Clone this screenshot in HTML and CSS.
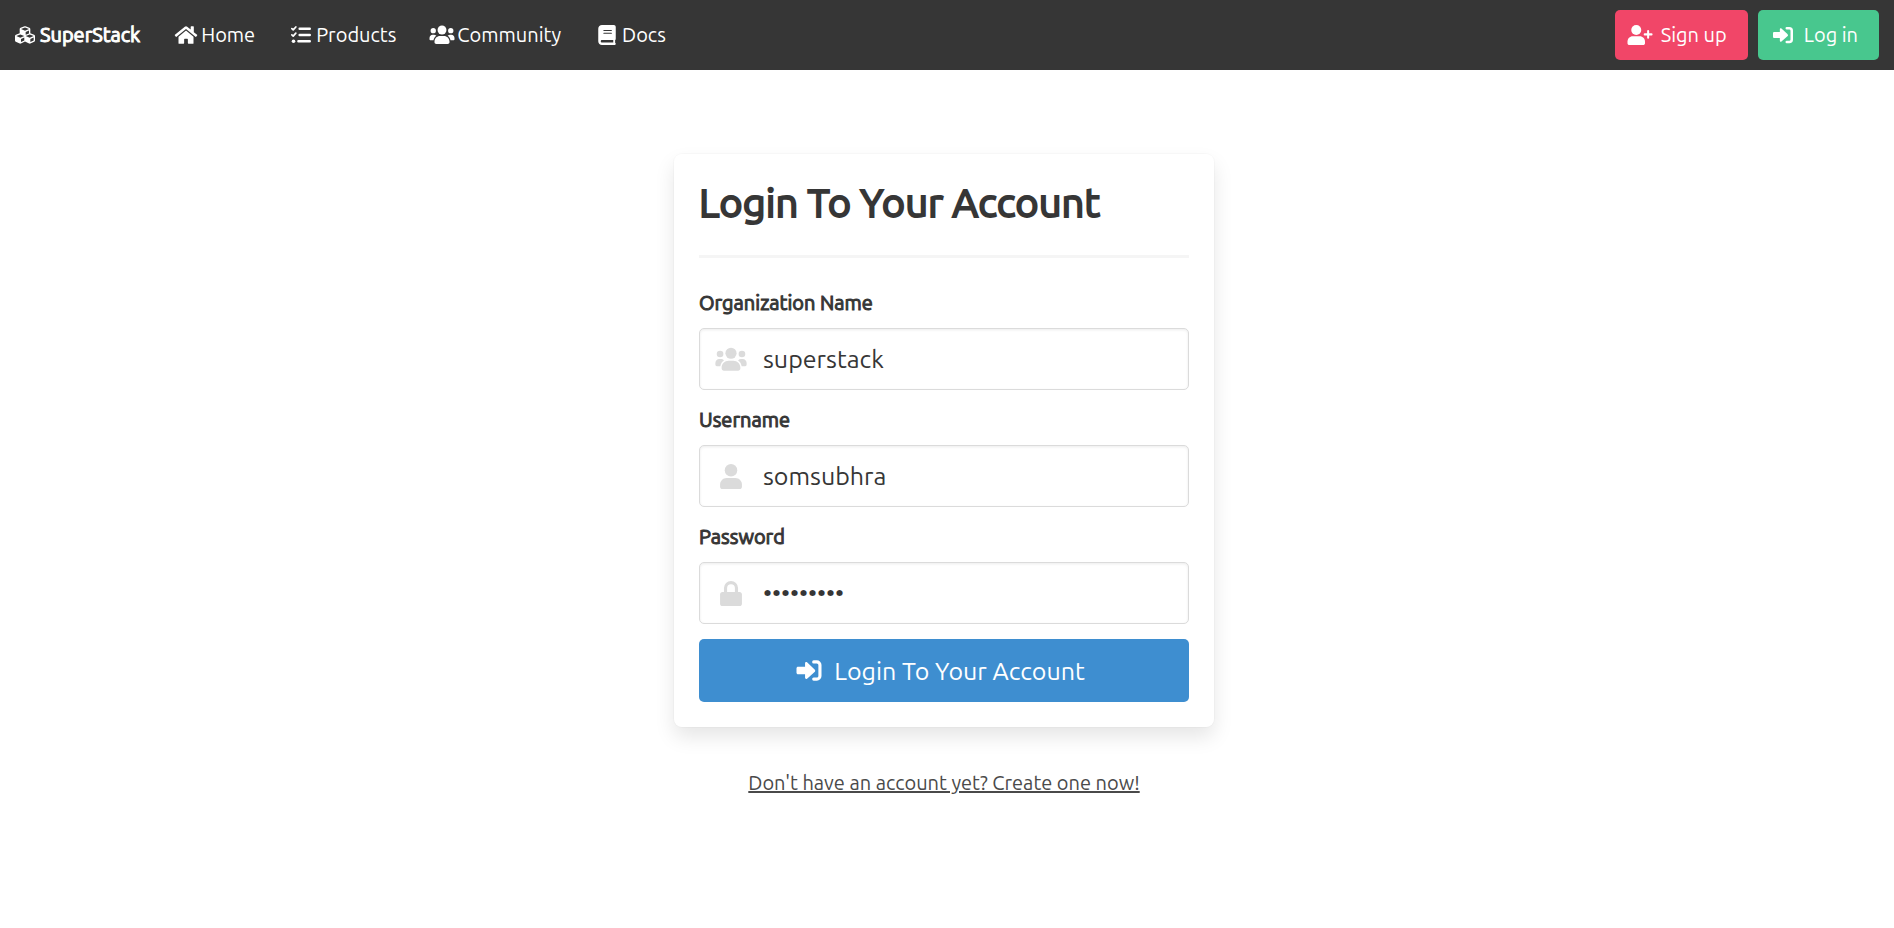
FILE: index.html
```html
<!DOCTYPE html>
<html lang="en">
<head>
<meta charset="utf-8">
<title>SuperStack</title>
<link rel="stylesheet" href="styles.css">
</head>
<body>
<svg class="sprite" aria-hidden="true">
  <symbol id="cubes" viewBox="0 0 512 512"><path fill-rule="evenodd" d="M488.600 250.200 392 214V105.500c0-15-9.300-28.400-23.400-33.700l-100-37.500c-8.100-3.100-17.100-3.100-25.300 0l-100 37.500c-14.100 5.300-23.400 18.700-23.400 33.700V214l-96.600 36.200C9.300 255.500 0 268.900 0 283.900V394c0 13.600 7.700 26.100 19.900 32.200l100 50c10.100 5.100 22.100 5.100 32.200 0l103.900-52 103.900 52c10.100 5.100 22.100 5.100 32.200 0l100-50c12.200-6.100 19.900-18.600 19.900-32.200V283.900c0-15-9.300-28.400-23.400-33.700zM358 214.800l-85 31.900v-68.200l85-37v73.300zM154 104.100l102-38.200 102 38.200v.6l-102 41.400-102-41.400v-.6zm84 291.100-85 42.500v-79.100l85-38.800v75.400zm0-112-102 41.400-102-41.400v-.6l102-38.200 102 38.200v.6zm240 112-85 42.500v-79.100l85-38.800v75.400zm0-112-102 41.400-102-41.400v-.6l102-38.200 102 38.200v.6z"/></symbol>
  <symbol id="home" viewBox="0 0 576 512"><path d="M280.400 148.300 96 300.100V464a16 16 0 0 0 16 16l112.100-.3a16 16 0 0 0 15.900-16V368a16 16 0 0 1 16-16h64a16 16 0 0 1 16 16v95.600a16 16 0 0 0 16 16.100L464 480a16 16 0 0 0 16-16V300L295.700 148.300a12.200 12.200 0 0 0-15.300 0zM571.600 251.500 488 182.600V44.100a12 12 0 0 0-12-12h-56a12 12 0 0 0-12 12v72.600L318.500 43a48 48 0 0 0-61 0L4.300 251.500a12 12 0 0 0-1.600 16.900l25.500 31A12 12 0 0 0 45.200 301l235.200-193.700a12.200 12.200 0 0 1 15.300 0L530.900 301a12 12 0 0 0 16.900-1.600l25.500-31a12 12 0 0 0-1.700-16.900z"/></symbol>
  <symbol id="tasks" viewBox="0 0 512 512"><g fill="none" stroke="currentColor" stroke-width="44" stroke-linecap="round" stroke-linejoin="round"><path d="M22 94l34 32 68-76M22 252l34 32 68-76"/><path stroke-width="64" d="M222 96h258M222 256h258M190 416h290"/></g><circle cx="64" cy="416" r="46"/></symbol>
  <symbol id="users" viewBox="0 0 640 512"><circle cx="320" cy="128" r="114"/><circle cx="96" cy="144" r="68"/><circle cx="544" cy="144" r="68"/><path d="M368 280h-96c-82 0-144 62-144 144v16c0 26 20 44 48 44h288c28 0 48-18 48-44v-16c0-82-62-144-144-144zM176 274c-18-18-40-26-64-26H80c-46 0-80 36-80 82v34c0 18 14 28 30 28h72c8-52 34-94 74-118zM464 274c18-18 40-26 64-26h32c46 0 80 36 80 82v34c0 18-14 28-30 28h-72c-8-52-34-94-74-118z"/></symbol>
  <symbol id="book" viewBox="0 0 448 512"><path fill-rule="evenodd" d="M448 336V48c0-26.500-21.500-48-48-48H96C43 0 0 43 0 96v320c0 53 43 96 96 96h320c17.700 0 32-14.300 32-32 0-12-6-22-16-28v-66c10-9 16-21 16-50zM144 128h192a14 14 0 0 1 0 28H144a14 14 0 0 1 0-28zm0 68h192a14 14 0 0 1 0 28H144a14 14 0 0 1 0-28zm240 252H96c-18 0-32-14-32-32s14-32 32-32h288v64z"/></symbol>
  <symbol id="user" viewBox="0 0 448 512"><circle cx="224" cy="128" r="128"/><path d="M314 288H134C60 288 0 348 0 422v42c0 27 21 48 48 48h352c27 0 48-21 48-48v-42c0-74-60-134-134-134z"/></symbol>
  <symbol id="user-plus" viewBox="0 0 640 512"><circle cx="224" cy="128" r="128"/><path d="M314 288H134C60 288 0 348 0 422v42c0 27 21 48 48 48h352c27 0 48-21 48-48v-42c0-74-60-134-134-134z"/><path fill="none" stroke="currentColor" stroke-width="52" stroke-linecap="round" d="M528 152v176M440 240h176"/></symbol>
  <symbol id="signin" viewBox="0 0 512 512"><path d="M376 238.500 216 88c-15-14-40.700-4-40.700 18v72H32c-18 0-32 14-32 32v92c0 18 14 32 32 32h143.300v72c0 22 25.700 32 40.700 18l160-142.500a24 24 0 0 0 0-35z"/><path d="M352 80h64a64 64 0 0 1 64 64v224a64 64 0 0 1-64 64h-64" fill="none" stroke="currentColor" stroke-width="64" stroke-linecap="round"/></symbol>
  <symbol id="lock" viewBox="0 0 448 512"><path fill-rule="evenodd" d="M80 224v-80a144 144 0 0 1 288 0v80h32c27 0 48 21 48 48v192c0 27-21 48-48 48H48c-27 0-48-21-48-48V272c0-27 21-48 48-48h32zm64 0h160v-80a80 80 0 0 0-160 0v80z"/></symbol>
</svg>
<header class="navbar">
  <nav class="nav-links" aria-label="Main">
    <a class="nav-item brand" href="#"><svg class="icon-sm"><use href="#cubes"/></svg>SuperStack</a>
    <a class="nav-item" href="#"><svg class="icon"><use href="#home"/></svg>Home</a>
    <a class="nav-item" href="#"><svg class="icon"><use href="#tasks"/></svg>Products</a>
    <a class="nav-item" href="#"><svg class="icon"><use href="#users"/></svg>Community</a>
    <a class="nav-item" href="#"><svg class="icon"><use href="#book"/></svg>Docs</a>
  </nav>
  <div class="nav-buttons">
    <a class="button signup" href="#"><svg class="icon"><use href="#user-plus"/></svg>Sign up</a>
    <a class="button login" href="#"><svg class="icon"><use href="#signin"/></svg>Log in</a>
  </div>
</header>
<main class="page">
  <form class="card">
    <h1 class="title">Login To Your Account</h1>
    <hr class="divider">
    <div class="field">
      <label class="label" for="org">Organization Name</label>
      <div class="control"><input class="input" id="org" type="text" value="superstack"><svg class="field-icon"><use href="#users"/></svg></div>
    </div>
    <div class="field">
      <label class="label" for="username">Username</label>
      <div class="control"><input class="input" id="username" type="text" value="somsubhra"><svg class="field-icon"><use href="#user"/></svg></div>
    </div>
    <div class="field">
      <label class="label" for="password">Password</label>
      <div class="control"><input class="input" id="password" type="password" value="superpass"><svg class="field-icon"><use href="#lock"/></svg></div>
    </div>
    <button class="submit" type="button"><svg class="submit-icon"><use href="#signin"/></svg>Login To Your Account</button>
  </form>
  <a class="create" href="#">Don't have an account yet? Create one now!</a>
</main>
</body>
</html>
```
FILE: styles.css
```css
* { box-sizing: border-box; }
body {
  margin: 0;
  background: #fff;
  color: #363636;
  font-family: Ubuntu, "Noto Sans", sans-serif;
  font-size: 20px;
  line-height: 30px;
}
svg { fill: currentColor; flex: none; }
.sprite { display: none; }
.navbar {
  display: flex;
  justify-content: space-between;
  align-items: center;
  min-height: 70px;
  padding: 0 15px;
  background: #363636;
}
.nav-links { display: flex; gap: 31px; }
.nav-item {
  display: flex;
  align-items: center;
  color: #fff;
  text-decoration: none;
}
.brand {
  gap: 5px;
  -webkit-text-stroke: 1px currentColor;
}
.icon-sm { width: 20px; height: 20px; }
.icon { width: 30px; height: 20px; }
.nav-buttons { display: flex; gap: 10px; }
.button {
  display: flex;
  align-items: center;
  gap: 6px;
  height: 50px;
  padding: 0 21px 0 10px;
  border-radius: 5px;
  color: #fff;
  text-decoration: none;
}
.signup { background: #f14668; }
.login { background: #48c78e; }
.page {
  display: flex;
  flex-direction: column;
  align-items: center;
  padding: 84px 21px 84px 15px;
}
.card {
  width: 100%;
  max-width: 540px;
  padding: 25px;
  border-radius: 8px;
  box-shadow: 0 10px 20px rgba(10, 10, 10, .1), 0 0 0 1px rgba(10, 10, 10, .02);
}
.title {
  margin: 0;
  font-size: 40px;
  line-height: 48px;
  font-weight: 400;
  -webkit-text-stroke: 2px currentColor;
}
.divider {
  height: 3px;
  margin: 28px 0 30px;
  border: 0;
  background: #f5f5f5;
}
.field { margin-bottom: 15px; }
.label {
  display: block;
  margin-bottom: 10px;
  -webkit-text-stroke: 1px currentColor;
}
.control { position: relative; }
.input {
  display: block;
  width: 100%;
  height: 62px;
  padding: 0 18px 0 63px;
  border: 1px solid #dbdbdb;
  border-radius: 5px;
  box-shadow: inset 0 1px 3px rgba(10, 10, 10, .08);
  background: #fff;
  color: #363636;
  font: inherit;
  font-size: 25px;
}
.field-icon {
  position: absolute;
  left: 16px;
  top: 19px;
  width: 32px;
  height: 25px;
  color: #dbdbdb;
}
.submit {
  display: flex;
  justify-content: center;
  align-items: center;
  gap: 6px;
  width: 100%;
  height: 63px;
  border: 0;
  border-radius: 5px;
  background: #3e8ed0;
  color: #fff;
  font: inherit;
  font-size: 25px;
}
.submit-icon { width: 38px; height: 25px; margin-left: -13px; }
.create {
  margin-top: 41px;
  color: #4a4a4a;
  text-decoration-thickness: 2px;
}
```
